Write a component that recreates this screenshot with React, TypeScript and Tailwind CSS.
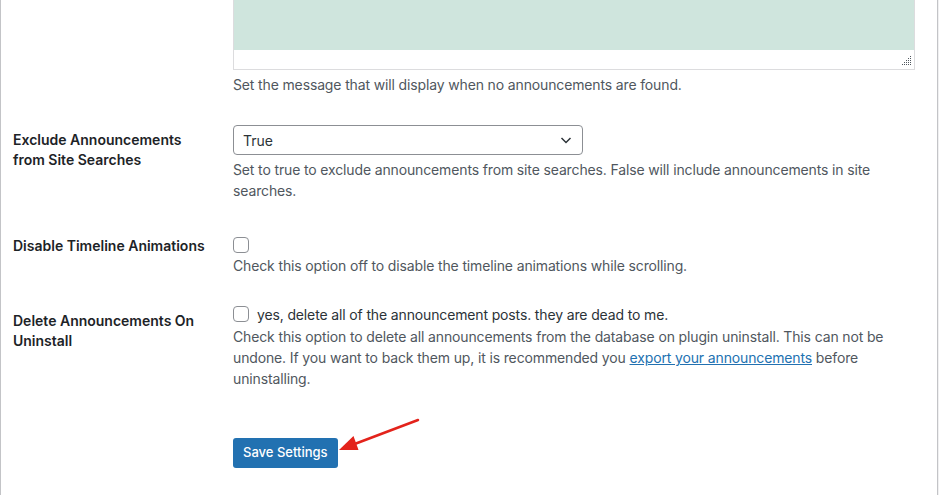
const font = "font-['Inter','Liberation_Sans',sans-serif]";

function Checkbox() {
  return <span className="inline-block h-4 w-4 shrink-0 rounded-[4px] border border-[#8c8f94] bg-white" />;
}

function Row({ label, children, cls = "" }: { label?: React.ReactNode; children: React.ReactNode; cls?: string }) {
  return (
    <div className="flex">
      <div className="w-[220px] shrink-0 pr-[10px] pt-[20px] text-[14px] font-semibold leading-5 text-[#1d2327]">{label}</div>
      <div className={`w-[682px] py-[15px] ${cls}`}>{children}</div>
    </div>
  );
}

function Desc({ children }: { children: React.ReactNode }) {
  return <p className="mt-1 text-[14px] leading-[21px] tracking-[-0.14px] text-[#50575e]">{children}</p>;
}

export default function App() {
  return (
    <div className={`relative h-[495px] w-[939px] overflow-hidden bg-[#f0f0f1] ${font}`}>
      <div className="h-[520px] w-[938px] rounded-b-lg border-x border-b border-[#c3c4c7] bg-white pl-[12px]">
        <Row cls="pt-0">
          <div className="relative flex h-[70px] flex-col border-x border-b border-[#dcdcde] bg-white">
            <div className="h-[50px] bg-[#cfe5dd]" />
            <svg className="absolute bottom-[3px] right-[2px]" width="11" height="11" viewBox="0 0 11 11">
              {[
                [9, 1], [9, 3], [7, 3], [9, 5], [7, 5], [5, 5], [9, 7], [7, 7], [5, 7], [3, 7], [9, 9], [7, 9], [5, 9], [3, 9], [1, 9],
              ].map(([x, y]) => (
                <rect key={`${x}-${y}`} x={x} y={y} width="1" height="1" fill="#50575e" />
              ))}
            </svg>
          </div>
          <Desc>Set the message that will display when no announcements are found.</Desc>
        </Row>

        <Row label={<>Exclude Announcements<br />from Site Searches</>}>
          <div className="flex h-[30px] w-[350px] items-center justify-between rounded-[4px] border border-[#8c8f94] bg-white pl-[9px] pr-[6px] text-[14px] text-[#2c3338]">
            <span>True</span>
            <svg width="20" height="20" viewBox="0 0 20 20" fill="none">
              <path d="M5.5 8l4.5 4.5L14.5 8" stroke="#2c3338" strokeWidth="1.5" />
            </svg>
          </div>
          <Desc>
            Set to true to exclude announcements from site searches. False will include announcements in site searches.
          </Desc>
        </Row>

        <Row label="Disable Timeline Animations">
          <div className="h-5 pt-1">
            <Checkbox />
          </div>
          <Desc>Check this option off to disable the timeline animations while scrolling.</Desc>
        </Row>

        <Row label={<>Delete Announcements On<br />Uninstall</>}>
          <div className="mb-[1px] flex h-4 items-center gap-2 text-[14px] tracking-[-0.14px] text-[#2c3338]">
            <Checkbox />
            <span>yes, delete all of the announcement posts. they are dead to me.</span>
          </div>
          <Desc>
            Check this option to delete all announcements from the database on plugin uninstall. This can not be undone. If
            you want to back them up, it is recommended you{" "}
            <a className="text-[#2271b1] underline" href="#">
              export your announcements
            </a>{" "}
            before uninstalling.
          </Desc>
        </Row>

        <div className="pl-[220px]">
          <button className="mt-[34px] h-[30px] rounded-[3px] bg-[#2271b1] px-[10px] text-[13px] font-medium text-white">
            Save Settings
          </button>
        </div>
      </div>

      <svg className="absolute left-[330px] top-[410px]" width="100" height="50" viewBox="330 410 100 50">
        <line x1="418" y1="420" x2="352" y2="445" stroke="#e3231b" strokeWidth="2.5" strokeLinecap="round" />
        <polygon points="339,450 358.5,450 353.5,436" fill="#e3231b" />
      </svg>
    </div>
  );
}
